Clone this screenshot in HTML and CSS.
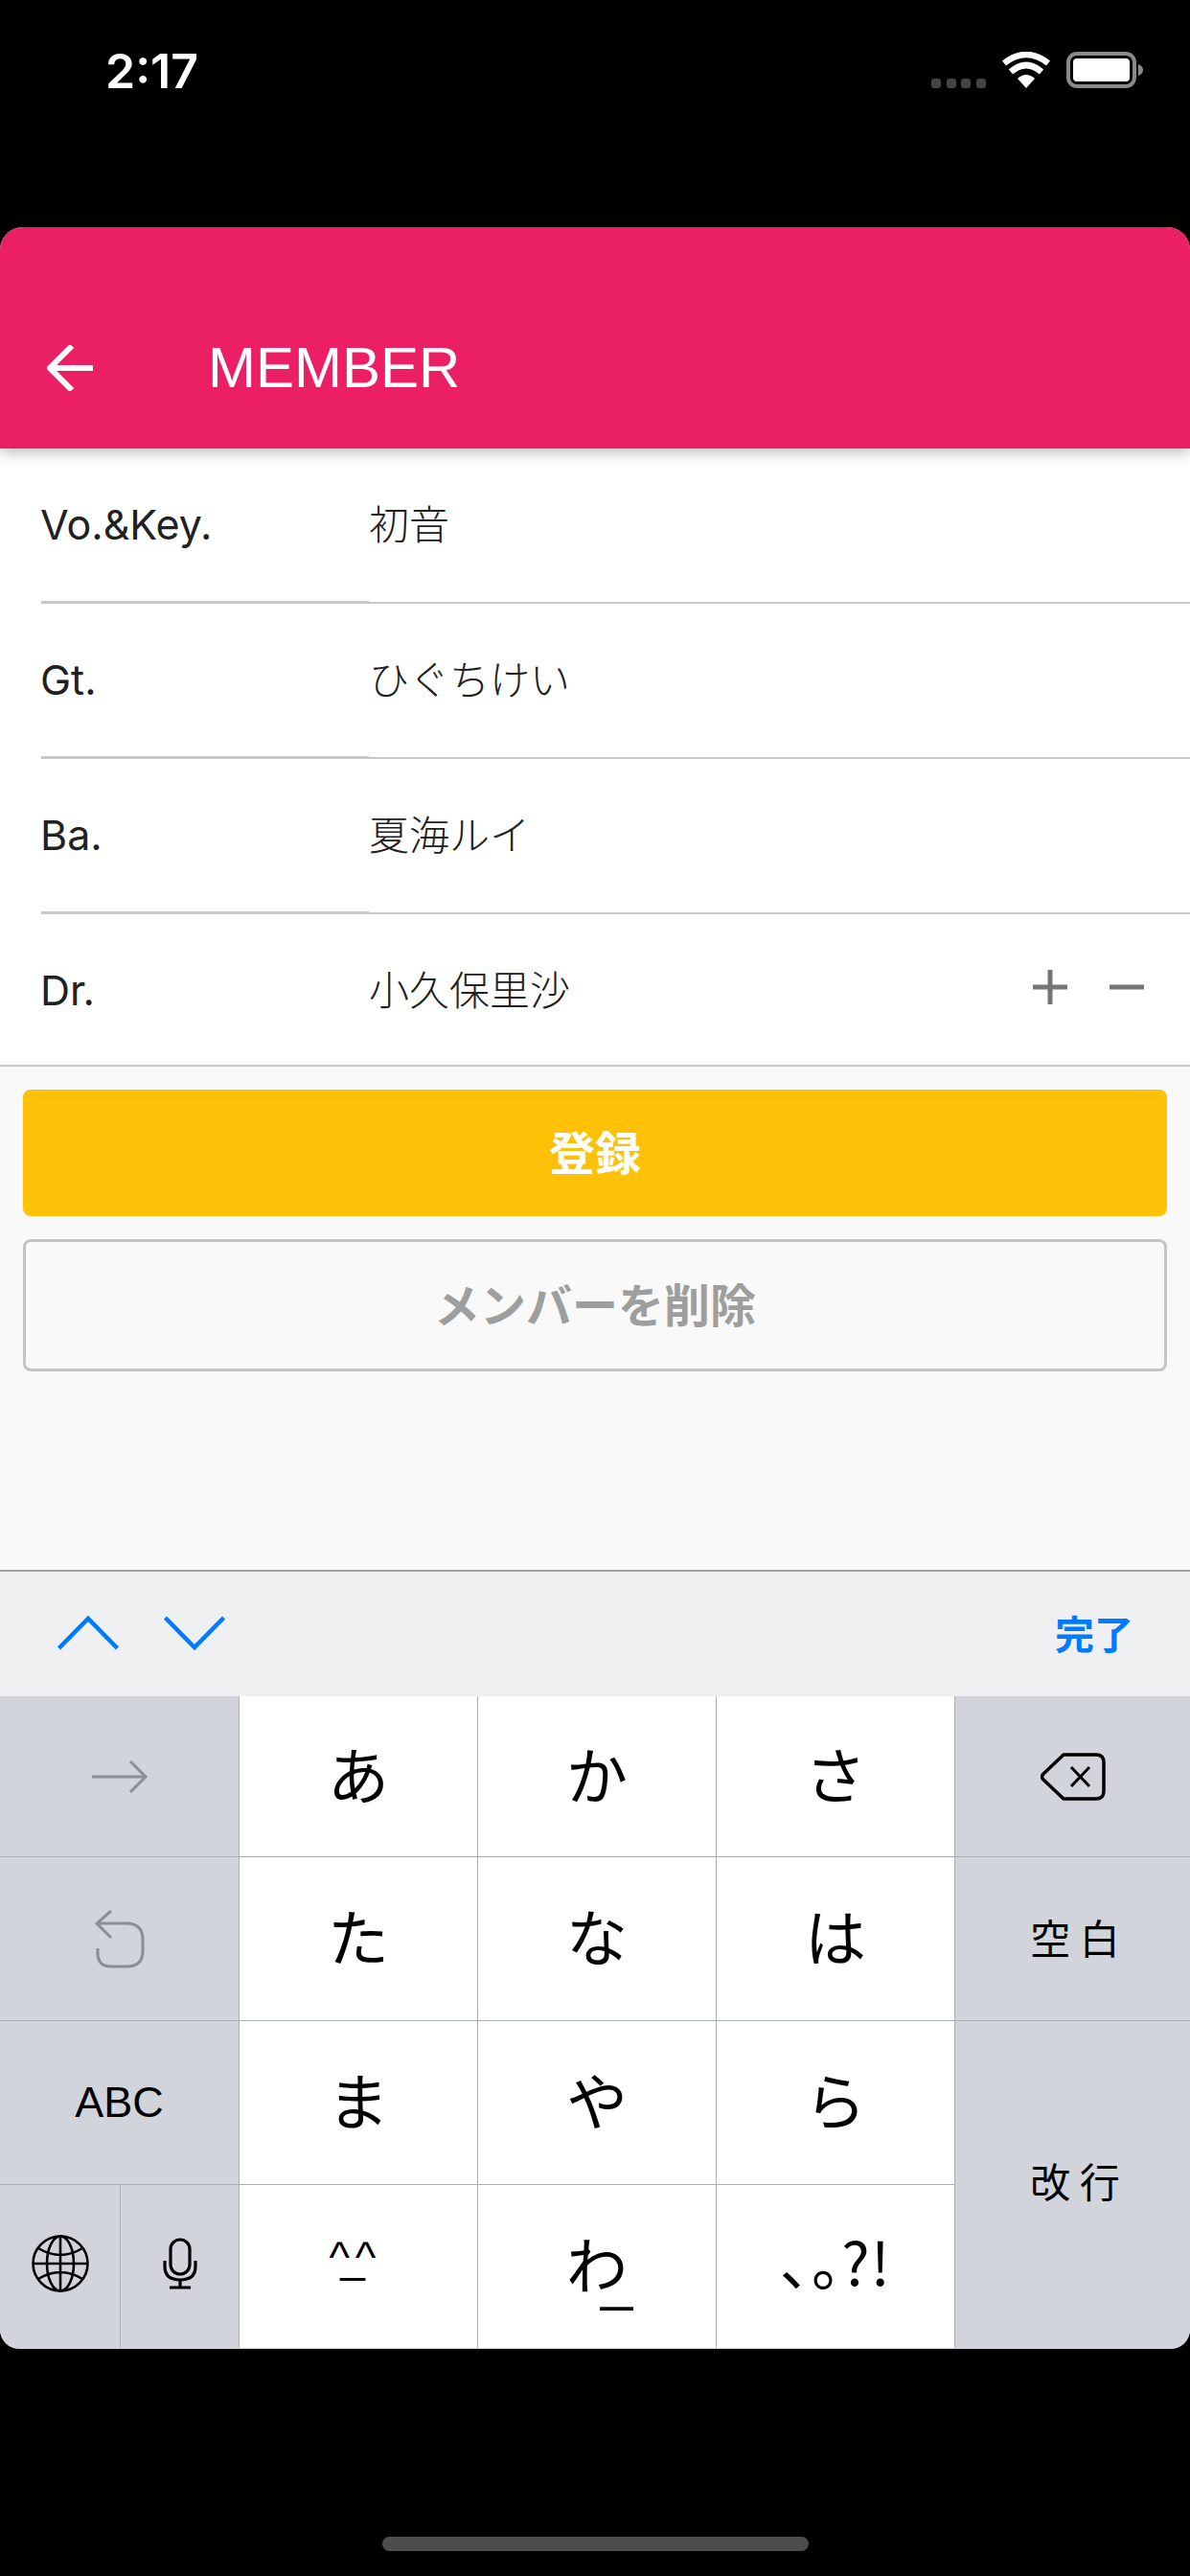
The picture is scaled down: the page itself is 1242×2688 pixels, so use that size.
FILE: index.html
```html
<!DOCTYPE html>
<html lang="ja">
<head>
<meta charset="utf-8">
<title>MEMBER</title>
<link rel="stylesheet" href="styles.css">
</head>
<body>

<div class="statusbar">
  <span class="time">2:17</span>
  <div class="status-icons">
    <svg class="sig" width="57" height="10" viewBox="0 0 57 10"><rect x="0" y="0" width="10" height="10" rx="3"/><rect x="16" y="0" width="10" height="10" rx="3"/><rect x="31" y="0" width="10" height="10" rx="3"/><rect x="47" y="0" width="10" height="10" rx="3"/></svg>
    <svg class="wifi" width="50" height="38" viewBox="0 0 50 38"><path d="M25 38 L16 28 Q25 20 34 28Z" fill="#fff"/><path d="M9 21 Q25 7 41 21" fill="none" stroke="#fff" stroke-width="6.5"/><path d="M2 12 Q25 -6 48 12" fill="none" stroke="#fff" stroke-width="6.5"/></svg>
    <svg class="batt" width="80" height="38" viewBox="0 0 80 38"><rect x="2" y="2" width="69" height="34" rx="9" fill="none" stroke="#8a8a8a" stroke-width="4"/><rect x="7" y="7" width="59" height="24" rx="4" fill="#fff"/><path d="M75 13 Q80 15 80 19 Q80 23 75 25Z" fill="#8a8a8a"/></svg>
  </div>
</div>

<div class="screen">
  <header class="appbar">
    <svg class="back" width="48" height="48" viewBox="0 0 48 48"><path d="M26 1 L3 24 L26 47 M3 24 H48" fill="none" stroke="#fff" stroke-width="6"/></svg>
    <h1 class="title">MEMBER</h1>
  </header>

  <div class="member-list">
    <div class="row">
      <div class="part">Vo.&amp;Key.</div>
      <div class="name">初音</div>
    </div>
    <div class="row">
      <div class="part">Gt.</div>
      <div class="name">ひぐちけい</div>
    </div>
    <div class="row">
      <div class="part">Ba.</div>
      <div class="name">夏海ルイ</div>
    </div>
    <div class="row last">
      <div class="part">Dr.</div>
      <div class="name">小久保里沙
        <div class="stepper">
          <svg width="36" height="36" viewBox="0 0 36 36"><path d="M18 0V36M0 18H36" stroke="#757575" stroke-width="5"/></svg>
          <svg width="36" height="36" viewBox="0 0 36 36"><path d="M0 18H36" stroke="#757575" stroke-width="5"/></svg>
        </div>
      </div>
    </div>
  </div>

  <div class="actions">
    <button class="btn btn-save">登録</button>
    <button class="btn btn-delete">メンバーを削除</button>
  </div>
</div>

<div class="keyboard">
  <div class="toolbar">
    <svg class="nav-arrow" width="64" height="38" viewBox="0 0 64 38"><path d="M1.5 35 L32 4 L62.5 35" fill="none" stroke="#007aff" stroke-width="4.5"/></svg>
    <svg class="nav-arrow" width="64" height="38" viewBox="0 0 64 38"><path d="M1.5 3 L32 34 L62.5 3" fill="none" stroke="#007aff" stroke-width="4.5"/></svg>
    <span class="done">完了</span>
  </div>
  <div class="keys">
    <div class="key fn"><svg width="60" height="34" viewBox="0 0 60 34"><path d="M1 17H57M41 1L57 17L41 33" fill="none" stroke="#8b8e93" stroke-width="3"/></svg></div>
    <div class="key">あ</div>
    <div class="key">か</div>
    <div class="key">さ</div>
    <div class="key fn"><svg width="68" height="50" viewBox="0 0 68 50"><path d="M24 2H58Q66 2 66 10V40Q66 48 58 48H24L3 28Q0 25 3 22Z" fill="none" stroke="#000" stroke-width="3.5" stroke-linejoin="round"/><path d="M32 15L51 35M51 15L32 35" stroke="#000" stroke-width="3"/></svg></div>

    <div class="key fn"><svg width="53" height="62" viewBox="0 0 53 62"><path d="M18 2L3 15L18 30M3 15H34Q51 15 51 32V44Q51 60 34 60H18Q4 60 4 46V41" fill="none" stroke="#8b8e93" stroke-width="3"/></svg></div>
    <div class="key">た</div>
    <div class="key">な</div>
    <div class="key">は</div>
    <div class="key fn small">空 白</div>

    <div class="key fn abc">ABC</div>
    <div class="key">ま</div>
    <div class="key">や</div>
    <div class="key">ら</div>
    <div class="key fn small k-return">改 行</div>

    <div class="key-split">
      <div class="key fn"><svg width="60" height="60" viewBox="0 0 60 60"><g fill="none" stroke="#000" stroke-width="2.6"><circle cx="30" cy="30" r="28.5"/><ellipse cx="30" cy="30" rx="14" ry="28.5"/><path d="M30 2V58M2 30H58M7 14Q30 28 53 14M7 46Q30 32 53 46"/></g></svg></div>
      <div class="key fn"><svg width="36" height="54" viewBox="0 0 36 54"><g fill="none" stroke="#000" stroke-width="3.2"><rect x="8" y="2" width="20" height="36" rx="10"/><path d="M2 24V30Q2 44 18 44Q34 44 34 30V24M18 44V52M7 52H29"/></g></svg></div>
    </div>
    <div class="key kao">^_^</div>
    <div class="key wa">わ<span class="wa-bar">_</span></div>
    <div class="key punct">、。?!</div>
  </div>
</div>

<div class="home-bar"></div>

</body>
</html>
```

FILE: styles.css
```css
* {box-sizing: border-box;}
html, body {margin: 0; padding: 0;}
body {width: 1242px; height: 2688px; background-color: #000; font-family: "Liberation Sans", "Noto Sans CJK JP", sans-serif; position: relative; overflow: hidden;}

.statusbar {height: 237px; padding: 54px 49px 0 110px; display: flex; justify-content: space-between; align-items: flex-start; color: #fff;}
.time {font-size: 50px; line-height: 40px; font-weight: 600; font-family: "Inter", "Liberation Sans", sans-serif;}
.status-icons {display: flex; align-items: flex-end; height: 38px;}
.sig {fill: #444; margin-right: 17px;}
.wifi {margin-right: 17px;}

.screen {background-color: #f9f9f9; height: 1401px; border-radius: 24px 24px 0 0; overflow: hidden;}
.appbar {height: 231px; background-color: #eb2064; display: flex; align-items: flex-end; padding: 0 0 51px 49px; box-shadow: 0 4px 14px rgba(0,0,0,0.28); position: relative;}
.back {margin-bottom: 9px;}
.title {margin: 0 0 0 120px; font-size: 60px; line-height: 66px; font-weight: normal; color: #fff;}

.member-list {background-color: #fff; border-bottom: 2px solid #c8c8c8;}
.row {display: flex; height: 162px; font-size: 42px; color: #212121;}
.row.last {height: 157px;}
.part {width: 342px; margin-left: 43px; padding-top: 54px; line-height: 50px; font-size: 43px; text-indent: -1px; font-family: "Inter", "Liberation Sans", sans-serif; border-bottom: 3px solid #c8c8c8;}
.name {flex: 1; padding-top: 56px; line-height: 50px; font-weight: 300; border-bottom: 2px solid #c8c8c8; display: flex; justify-content: space-between;}
.row.last .part, .row.last .name {border-bottom: 0;}
.stepper {display: flex; gap: 44px; padding: 2px 48px 0 0; align-items: flex-start;}

.actions {padding: 24px 24px 0; display: flex; flex-direction: column; gap: 24px;}
.btn {display: block; width: 100%; border-radius: 8px; font-size: 48px; font-weight: bold; font-family: "Liberation Sans", "Noto Sans CJK JP", sans-serif;}
.btn-save {height: 132px; background-color: #ffc107; border: 0; color: #fff; padding: 0 0 6px;}
.btn-delete {height: 138px; background-color: transparent; border: 3px solid #c4c4c4; color: #9e9e9e; padding: 0 0 6px;}

.keyboard {height: 812px; border-top: 2px solid #a0a2a7; border-radius: 0 0 20px 20px; overflow: hidden; background-color: #d1d4db; box-shadow: 0 1px 0 #d8d8d8;}
.toolbar {height: 130px; background-color: #eff0f2; display: flex; align-items: center; padding: 0 59px 0 60px;}
.nav-arrow {margin-right: 47px; margin-bottom: 3px;}
.done {margin-left: auto; color: #007aff; font-size: 41px; font-weight: bold; padding-bottom: 5px;}

.keys {display: grid; grid-template-columns: 250px 249px 249px 249px 245px; grid-template-rows: 168px 171px 171px 170px;}
.key {background-color: #fff; border-right: 1.5px solid #a9adb6; border-bottom: 1.5px solid #a9adb6; display: flex; align-items: center; justify-content: center; font-size: 64px; color: #000; font-family: "Noto Sans CJK JP", sans-serif; padding-bottom: 10px; position: relative;}
.key.fn {background-color: #d1d4db; padding-bottom: 0;}
.keys > .key:nth-child(5n) {border-right: 0;}
.key.small {font-size: 42px; padding: 0 0 6px 5px;}
.key.abc {font-size: 45px; font-family: "Liberation Sans", sans-serif;}
.k-return {grid-column: 5; grid-row: 3 / span 2; border-right: 0; border-bottom: 0;}
.key.small.k-return {padding-bottom: 10px;}
.key-split {display: grid; grid-template-columns: 126px 124px;}
.key-split .key {border-bottom: 0; padding-bottom: 7px;}
.key-split .key:first-child {border-right: 1.5px solid #a9adb6;}
.key.kao {font-size: 46px; font-family: "Liberation Sans", sans-serif; letter-spacing: -10px; border-bottom: 0; padding: 0 22px 20px 0;}
.key.wa {border-bottom: 0;}
.wa-bar {position: absolute; left: 128px; top: 69px; font-family: "Liberation Sans", sans-serif; font-size: 60px; line-height: 60px;}
.key.punct {border-bottom: 0; font-size: 62px; font-feature-settings: "palt"; letter-spacing: 1px; padding-bottom: 14px;}

.home-bar {position: absolute; left: 399px; top: 2647px; width: 445px; height: 15px; border-radius: 8px; background-color: #4d4d4d;}
```
